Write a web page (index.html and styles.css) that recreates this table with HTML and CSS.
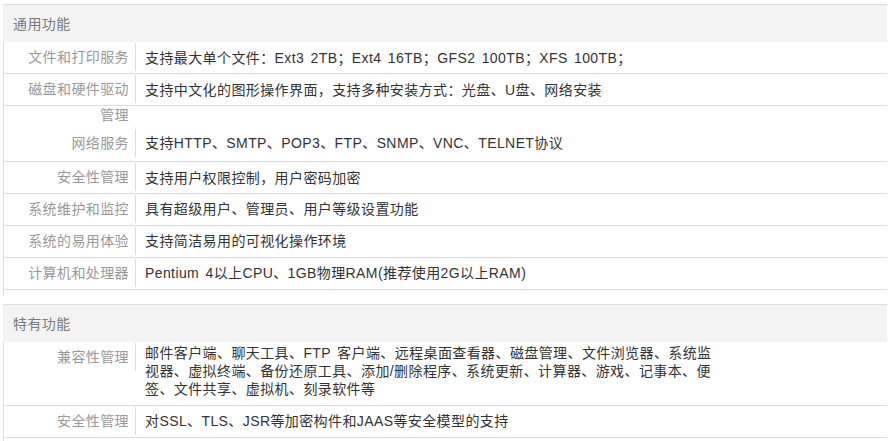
FILE: index.html
```html
<!DOCTYPE html>
<html lang="zh-CN">
<head>
<meta charset="utf-8">
<title>功能</title>
<link rel="stylesheet" href="styles.css">
</head>
<body>
<div class="page">
  <section class="sec">
    <div class="sec-head">通用功能</div>
    <div class="sec-body">
      <div class="row">
        <div class="lbl">文件和打印服务</div>
        <div class="val">支持最大单个文件<span class="pc">：</span>Ext3 2TB<span class="pc">；</span>Ext4 16TB<span class="pc">；</span>GFS2 100TB<span class="pc">；</span>XFS 100TB<span class="pc">；</span></div>
      </div>
      <div class="row">
        <div class="lbl">磁盘和硬件驱动</div>
        <div class="val">支持中文化的图形操作界面<span class="pc">，</span>支持多种安装方式<span class="pc">：</span>光盘、U盘、网络安装</div>
      </div>
      <div class="row row-overflow">
        <div class="spill">管理</div>
        <div class="row-inner">
          <div class="lbl">网络服务</div>
          <div class="val">支持HTTP、SMTP、POP3、FTP、SNMP、VNC、TELNET协议</div>
        </div>
      </div>
      <div class="row">
        <div class="lbl">安全性管理</div>
        <div class="val">支持用户权限控制<span class="pc">，</span>用户密码加密</div>
      </div>
      <div class="row">
        <div class="lbl">系统维护和监控</div>
        <div class="val">具有超级用户、管理员、用户等级设置功能</div>
      </div>
      <div class="row">
        <div class="lbl">系统的易用体验</div>
        <div class="val">支持简洁易用的可视化操作环境</div>
      </div>
      <div class="row">
        <div class="lbl">计算机和处理器</div>
        <div class="val">Pentium 4以上CPU、1GB物理RAM(推荐使用2G以上RAM)</div>
      </div>
    </div>
  </section>

  <section class="sec">
    <div class="sec-head">特有功能</div>
    <div class="sec-body">
      <div class="row row-multi">
        <div class="lbl">兼容性管理</div>
        <div class="val val-multi">
          <span class="ln">邮件客户端、聊天工具、FTP 客户端、远程桌面查看器、磁盘管理、文件浏览器、系统监</span>
          <span class="ln">视器、虚拟终端、备份还原工具、添加/删除程序、系统更新、计算器、游戏、记事本、便</span>
          <span class="ln">签、文件共享、虚拟机、刻录软件等</span>
        </div>
      </div>
      <div class="row">
        <div class="lbl">安全性管理</div>
        <div class="val">对SSL、TLS、JSR等加密构件和JAAS等安全模型的支持</div>
      </div>
    </div>
  </section>
</div>
</body>
</html>
```

FILE: styles.css
```css
html, body {
  margin: 0;
  padding: 0;
  background: #ffffff;
}

body {
  font-family: "Liberation Sans", "Noto Sans CJK SC", Arial, sans-serif;
  font-size: 14px;
  letter-spacing: 0.4px;
  color: #333333;
}

.page {
  width: 884px;
  margin: 4px 0 0 3px;
  display: flex;
  flex-direction: column;
  gap: 8px;
}

.sec {
  border-top: 1px solid #dcdcdc;
}

.sec-head {
  height: 37px;
  line-height: 38px;
  padding-left: 10px;
  background: #f3f3f3;
  color: #7a7a7a;
  font-size: 14px;
}

.sec-body {
  border-left: 1px solid #dcdcdc;
  padding-bottom: 6px;
}

.sec + .sec .sec-body {
  padding-bottom: 4px;
}

.row {
  display: flex;
  align-items: flex-start;
  border-bottom: 1px solid #dcdcdc;
  min-height: 31px;
}

.lbl {
  flex: 0 0 125px;
  height: 28px;
  line-height: 28px;
  margin-top: 1px;
  padding-right: 6px;
  text-align: right;
  color: #999999;
  border-right: 1px solid #dcdcdc;
  white-space: nowrap;
}

.val {
  padding-left: 9px;
  line-height: 28px;
  padding-top: 1px;
  white-space: nowrap;
  word-spacing: 2px;
}

.pc {
  font-family: "Noto Sans CJK TC", "Noto Sans CJK SC", sans-serif;
}

.row-overflow {
  flex-direction: column;
  min-height: 0;
}

.spill {
  width: 125px;
  height: 23px;
  line-height: 18px;
  text-align: right;
  color: #999999;
}

.row-inner {
  display: flex;
  align-items: flex-start;
  padding-bottom: 4px;
}

.row-inner .lbl {
  margin-top: 0;
}

.row-inner .val {
  padding-top: 0;
}

.row-multi {
  min-height: 63px;
}

.val-multi {
  display: flex;
  flex-direction: column;
  line-height: 18px;
  padding-top: 2px;
  padding-bottom: 7px;
}

.ln {
  display: block;
  white-space: nowrap;
}
```
